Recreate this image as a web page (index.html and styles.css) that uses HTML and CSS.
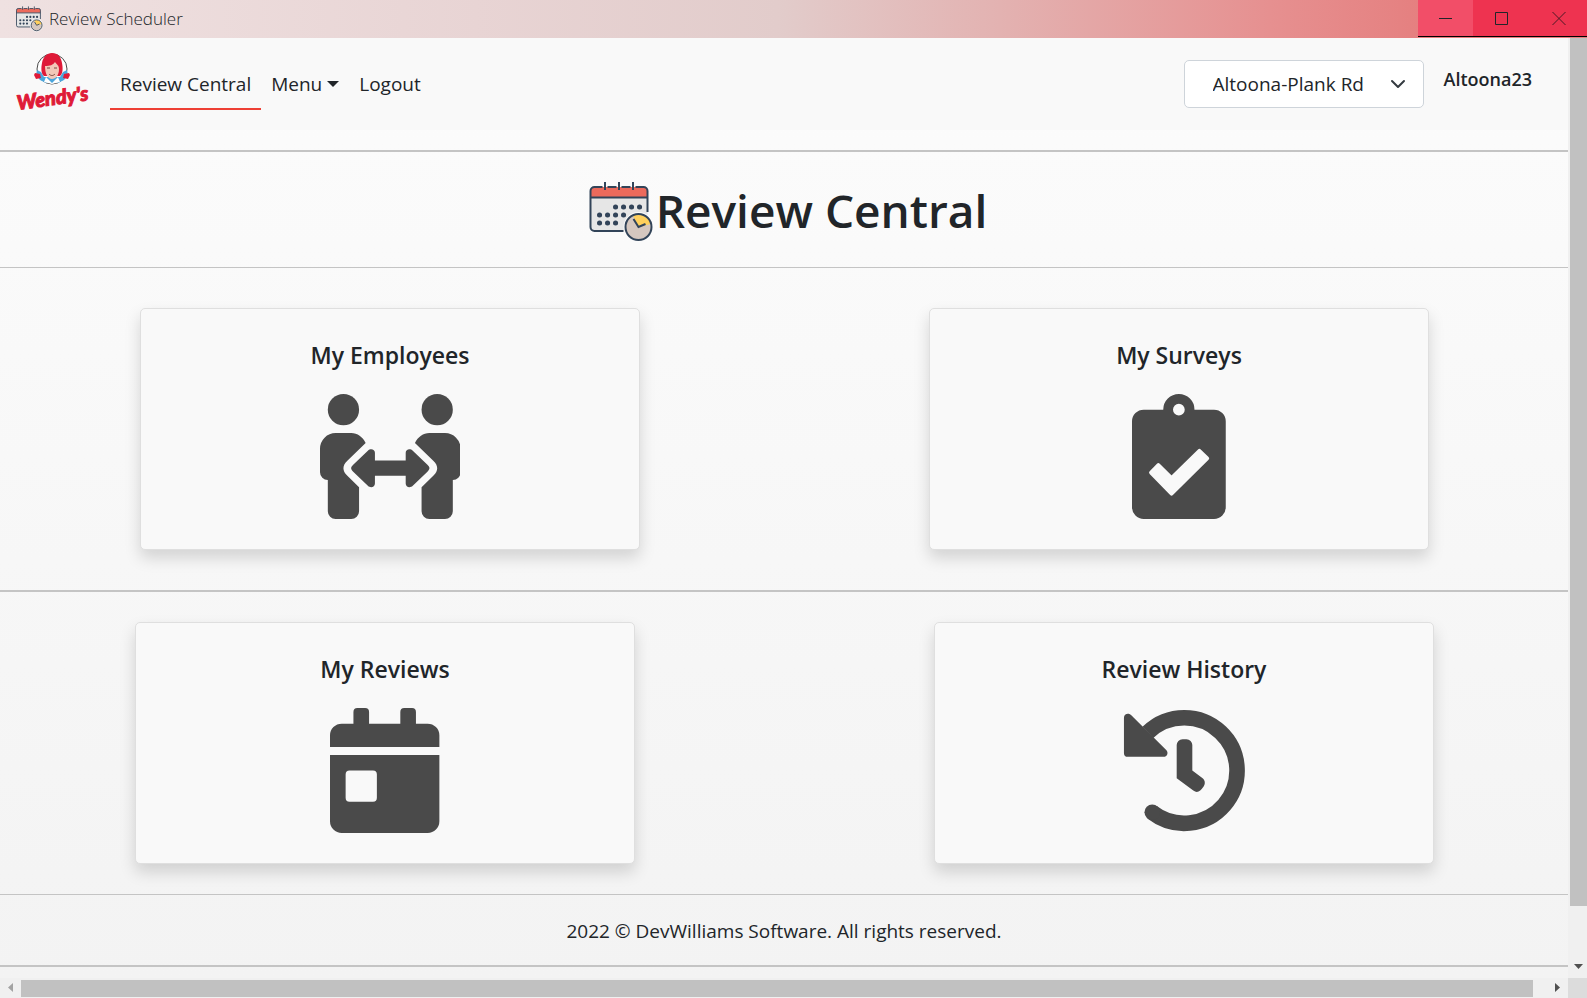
FILE: index.html
```html
<!DOCTYPE html>
<html lang="en">
<head>
<meta charset="utf-8">
<title>Review Scheduler</title>
<link rel="stylesheet" href="styles.css">
</head>
<body>
<svg class="sprite" aria-hidden="true">
  <symbol id="calendar-clock" viewBox="0 0 64 62">
    <rect x="1" y="6" width="57" height="44" rx="4" fill="#e6e6e6"/>
    <path d="M1 16V10a4 4 0 0 1 4-4h49a4 4 0 0 1 4 4v6z" fill="#ec6a5c"/>
    <path d="M34 50H5a4 4 0 0 1-4-4V10a4 4 0 0 1 4-4h8M18 6h9M32 6h9M46 6h8a4 4 0 0 1 4 4v21M1 16.500h57M15.500 1v8M29.500 1v8M43.500 1v8" fill="none" stroke="#324459" stroke-width="2"/>
    <path d="M26 26h.1M34 26h.1M42 26h.1M50 26h.1M10 34h.1M18 34h.1M26 34h.1M34 34h.1M10 42h.1M18 42h.1M26 42h.1" stroke="#324459" stroke-width="5" stroke-linecap="round"/>
    <circle cx="49" cy="46" r="15" fill="#fbfbfb"/>
    <circle cx="49" cy="46" r="13" fill="#d5c7bf"/>
    <path d="M49 46L43.500 34.500A13 13 0 0 1 61.500 43z" fill="#ffd05c"/>
    <circle cx="49" cy="46" r="13" fill="none" stroke="#324459" stroke-width="2"/>
    <path d="M44 38l5 8 7-3" fill="none" stroke="#324459" stroke-width="2"/>
  </symbol>
</svg>

<header class="titlebar">
  <svg class="titlebar-icon" aria-hidden="true"><use href="#calendar-clock"/></svg>
  <span class="titlebar-name">Review Scheduler</span>
  <div class="window-controls">
    <button class="control control-min" aria-label="Minimize"><svg viewBox="0 0 14 14"><path d="M0 7.500h13"/></svg></button>
    <button class="control" aria-label="Maximize"><svg viewBox="0 0 14 14"><path d="M.5 1.500h12v12h-12z"/></svg></button>
    <button class="control control-close" aria-label="Close"><svg viewBox="0 0 14 14"><path d="M.5 1l13 13M13.500 1l-13 13"/></svg></button>
  </div>
</header>

<div class="viewport">
  <div class="page">
    <nav class="navbar">
      <a class="brand" href="#" aria-label="Wendy's">
        <svg viewBox="0 0 76 64">
          <circle cx="35" cy="17" r="15" fill="#fff" stroke="#4a4a4a" stroke-width="1"/>
          <path d="M20 18l4 2 3 5h16l3-5 4-2 1 5-4 5-6 3H29l-6-3-4-5z" fill="#4ba6dc"/>
          <path d="M29 25l6 6 6-6 2 5-8 2-8-2z" fill="#fff"/>
          <path d="M18 21l5 1 1 4-5 1-1-2-1-2z" fill="#df1a38"/>
          <path d="M52 21l-5 1-1 4 5 1 1-2 1-2z" fill="#df1a38"/>
          <path d="M27 24c-3-2-3-8-2-13C26 5 30 1 35 1c6 0 9 4 10 10 1 5 1 11-2 13z" fill="#df1a38"/>
          <path d="M28 14c5 0 8-1 10-4 2 3 4 3 4 7 0 6-3 10-7 10s-7-5-7-13z" fill="#f3c8b8"/>
          <path d="M30 16h3M37 16h3M32 22c2 2 4 2 6 0" fill="none" stroke="#784a40" stroke-width="1"/>
          <text class="brand-word" x="1" y="58" transform="rotate(-8 1 58)">Wendy's</text>
        </svg>
      </a>
      <div class="nav-links">
        <a class="nav-link active" href="#">Review Central</a>
        <button class="nav-link nav-menu">Menu</button>
        <a class="nav-link" href="#">Logout</a>
      </div>
      <div class="account">
        <select class="store" aria-label="Store"><option>Altoona-Plank Rd</option></select>
        <span class="user">Altoona23</span>
      </div>
    </nav>

    <h1 class="heading"><svg aria-hidden="true"><use href="#calendar-clock"/></svg>Review Central</h1>

    <main>
      <section class="row row-top">
        <a class="card" href="#">
          <h2>My Employees</h2>
          <svg viewBox="0 0 576 512" aria-hidden="true">
            <g id="person">
              <circle cx="96" cy="64" r="64"/>
              <path d="M64 160h64c25 0 47 16 59 41l-76 73c-20 19-20 40 0 60l49 48v98a32 32 0 0 1-32 32H64a32 32 0 0 1-32-32V352A32 32 0 0 1 0 320v-96a64 64 0 0 1 64-64z"/>
            </g>
            <use href="#person" transform="matrix(-1 0 0 1 576 0)"/>
            <path d="M136 290l60-58c11-11 29-6 29 9v31h126v-31c0-15 18-20 29-9l60 58c11 10 11 18 0 28l-60 58c-11 11-29 6-29-9v-32H225v32c0 15-18 20-29 9l-60-58c-11-10-11-18 0-28z"/>
          </svg>
        </a>
        <a class="card" href="#">
          <h2>My Surveys</h2>
          <svg viewBox="0 0 384 512" aria-hidden="true">
            <path fill-rule="evenodd" d="M128 64a64 64 0 0 1 128 0h80a48 48 0 0 1 48 48v352a48 48 0 0 1-48 48H48a48 48 0 0 1-48-48V112a48 48 0 0 1 48-48zM192 40a24 24 0 1 0 0 48 24 24 0 0 0 0-48z"/>
            <path class="cutout" d="M78 322l30-31 54 54L276 233l32 31-146 144z"/>
          </svg>
        </a>
      </section>
      <section class="row row-bottom">
        <a class="card" href="#">
          <h2>My Reviews</h2>
          <svg viewBox="0 0 448 512" aria-hidden="true">
            <path d="M0 160v-48a48 48 0 0 1 48-48h48V16a16 16 0 0 1 16-16h32a16 16 0 0 1 16 16v48h128V16a16 16 0 0 1 16-16h32a16 16 0 0 1 16 16v48h48a48 48 0 0 1 48 48v48z"/>
            <path fill-rule="evenodd" d="M0 192h448v272a48 48 0 0 1-48 48H48a48 48 0 0 1-48-48zM80 256a16 16 0 0 0-16 16v96a16 16 0 0 0 16 16h96a16 16 0 0 0 16-16v-96a16 16 0 0 0-16-16z"/>
          </svg>
        </a>
        <a class="card" href="#">
          <h2>Review History</h2>
          <svg viewBox="0 0 512 512" aria-hidden="true">
            <path d="M106 100A216 216 0 1 1 123 427" fill="none" stroke="currentColor" stroke-width="64" stroke-linecap="butt"/>
            <circle cx="124" cy="427" r="32"/>
            <path d="M8 40c0-16 18-22 29-11l144 143c11 11 4 28-11 28H24a16 16 0 0 1-16-16z"/>
            <path d="M224 152a24 24 0 0 1 24-24h16a24 24 0 0 1 24 24v104l41 31c13 10 13 24 3 38s-23 26-40 13l-68-50z"/>
          </svg>
        </a>
      </section>
    </main>

    <footer class="footer">2022 © DevWilliams Software. All rights reserved.</footer>
  </div>
  <div class="vscroll" aria-hidden="true"><div class="vthumb"></div><svg viewBox="0 0 10 5"><path d="M0 0h9L4.500 5z"/></svg></div>
</div>
<div class="hscroll" aria-hidden="true">
  <svg class="left-arrow" viewBox="0 0 5 10"><path d="M5 0v9L0 4.500z"/></svg>
  <div class="hthumb"></div>
  <svg class="right-arrow" viewBox="0 0 5 10"><path d="M0 0v9l5-4.500z"/></svg>
  <div class="corner"></div>
</div>
</body>
</html>
```
FILE: styles.css
```css
* { box-sizing: border-box; }

body {
  margin: 0;
  min-height: 100vh;
  display: flex;
  flex-direction: column;
  font-family: "Open Sans", "Noto Sans", sans-serif;
  font-size: 19px;
  line-height: 24px;
  color: #212529;
  background: #f3f3f3;
}

a { color: inherit; text-decoration: none; }
button { font: inherit; color: inherit; border: 0; background: none; padding: 0; }
.sprite { position: absolute; width: 0; height: 0; }

/* Window title bar */
.titlebar {
  display: flex;
  align-items: center;
  height: 38px;
  padding-left: 16px;
  gap: 6px;
  font-size: 17px;
  font-weight: 300;
  background: linear-gradient(90deg, #efe1e1, #e8d4d4 30%, #e2cccb 49%, #e3b2b1 63%, #e69090 80%, #e57f7f 90%);
}
.titlebar-icon { width: 27px; height: 26px; }
.window-controls {
  display: flex;
  align-self: flex-start;
  height: 37px;
  margin-left: auto;
  border-bottom: 1px solid #000;
}
.control {
  display: grid;
  place-items: center;
  width: 57px;
  background: #ee3350;
}
.control-min { width: 55px; background: #f24e68; }
.control svg { width: 14px; height: 14px; fill: none; stroke: #212529; stroke-width: 1; }
.control-close svg { stroke: #4a1a24; }

/* Scrolled page */
.viewport { flex: 1; display: flex; }
.page {
  flex: 1;
  min-width: 0;
  background: linear-gradient(#fcfcfc, #f3f3f3);
}

.navbar {
  display: flex;
  align-items: center;
  height: 92px;
  padding: 0 36px 0 17px;
  background: #f9f9f9;
}
.brand svg { display: block; width: 76px; height: 64px; overflow: visible; }
.brand-word {
  font: italic 900 20px Lato, sans-serif;
  fill: #df1a38;
  stroke: #df1a38;
  stroke-width: 1;
}
.nav-links { display: flex; margin-left: 17px; }
.nav-link {
  height: 51px;
  padding: 10px;
  line-height: 30px;
  border-bottom: 2px solid transparent;
}
.nav-link.active { border-color: #ee4035; }
.nav-menu::after {
  content: "";
  display: inline-block;
  margin-left: 5px;
  vertical-align: 4px;
  border: 6px solid transparent;
  border-top-color: currentColor;
  border-bottom: 0;
}
.account { display: flex; align-items: center; gap: 20px; margin-left: auto; }
.store {
  appearance: none;
  width: 240px;
  height: 48px;
  padding: 0 28px;
  font: inherit;
  color: #212529;
  border: 1px solid #ced4da;
  border-radius: 5px;
  background: #fff url("data:image/svg+xml,%3Csvg xmlns='http://www.w3.org/2000/svg' viewBox='0 0 16 16'%3E%3Cpath fill='none' stroke='%23343a40' stroke-linecap='round' stroke-linejoin='round' stroke-width='2' d='M2 5l6 6 6-6'/%3E%3C/svg%3E") no-repeat right 17px center / 16px;
}
.user { padding-bottom: 10px; font-size: 18px; font-weight: 600; }

.heading {
  display: flex;
  align-items: center;
  justify-content: center;
  gap: 2px;
  height: 118px;
  margin: 20px 0 0;
  padding-left: 8px;
  border-top: 2px solid #c4c4c4;
  border-bottom: 1px solid #c4c4c4;
  font-size: 46px;
  line-height: 60px;
  font-weight: 600;
}
.heading svg { width: 65px; height: 62px; margin-top: 4px; }

.row { display: flex; justify-content: space-between; gap: 24px; }
.row-top { padding: 40px 139px 40px 140px; border-bottom: 2px solid #c4c4c4; }
.row-bottom { padding: 30px 134px 30px 135px; border-bottom: 1px solid #c4c4c4; }
.card {
  display: flex;
  flex: 0 1 500px;
  flex-direction: column;
  align-items: center;
  gap: 24px;
  height: 242px;
  padding: 31px 16px 29px;
  border: 1px solid #dfdfdf;
  border-radius: 5px;
  background: #f9f9f9;
  box-shadow: 0 8px 16px rgba(0, 0, 0, .15);
}
.card h2 { margin: 0; font-size: 23px; line-height: 30px; font-weight: 600; }
.card svg { height: 125px; color: #4a4a4a; fill: currentColor; }
.card .cutout { fill: #f9f9f9; stroke: #f9f9f9; stroke-width: 16; stroke-linejoin: round; }

.footer {
  height: 72px;
  padding-top: 24px;
  text-align: center;
  border-bottom: 2px solid #c4c4c4;
}

/* Scroll bars */
.vscroll {
  display: flex;
  flex-direction: column;
  align-items: center;
  justify-content: space-between;
  width: 19px;
  padding: 0 0 9px 2px;
  background: #f0f0f0;
}
.vthumb { width: 17px; flex: 0 1 868px; background: #c1c1c1; }
.vscroll svg { width: 10px; height: 5px; fill: #505050; }
.hscroll {
  display: flex;
  align-items: center;
  height: 20px;
  background: #f0f0f0;
}
.hscroll svg { width: 5px; height: 10px; fill: #505050; }
.hscroll .left-arrow { margin: 0 8px; fill: #a3a3a3; }
.hscroll .right-arrow { margin: 0 8px 0 22px; }
.hthumb { flex: 1; height: 17px; background: #c1c1c1; }
.corner { width: 19px; height: 20px; background: #dcdcdc; }
```
